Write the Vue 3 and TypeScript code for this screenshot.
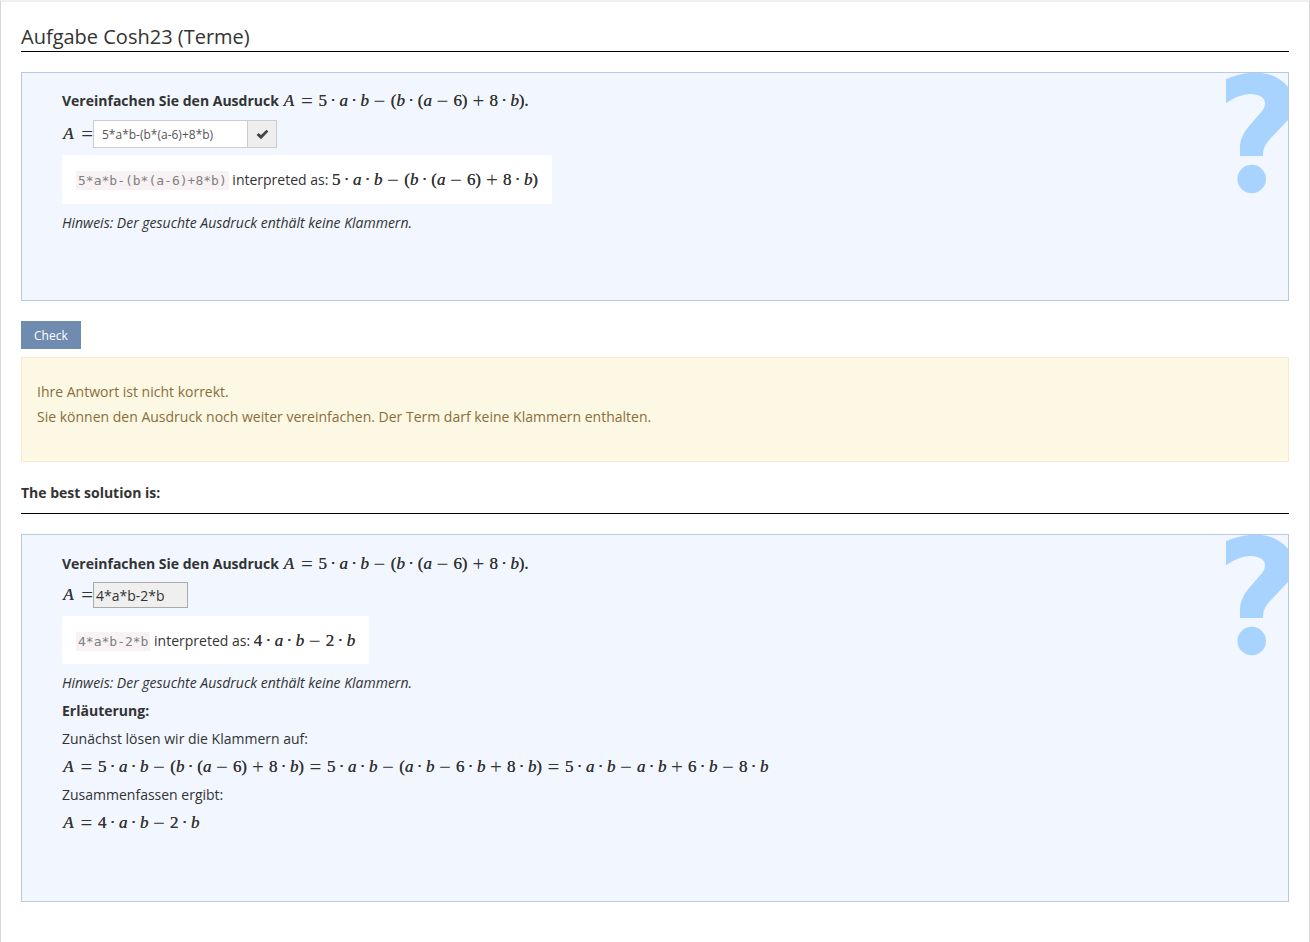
<script setup lang="ts">
import { ref, h, type FunctionalComponent } from 'vue'

const tokenClass = (t: string): string => {
  if (t === '=') return 'tok op rel'
  if (t === '+' || t === '−') return 'tok op bin'
  if (t === '·') return 'tok dot'
  if (t === '(' || t === ')') return 'tok paren'
  if (t === 'A') return 'tok var upper'
  if (/[a-z]/.test(t)) return 'tok var'
  return 'tok num'
}

// Typesets a formula by giving every symbol the spacing of its class.
const Formula: FunctionalComponent<{ tex: string }> = (props) =>
  h(
    'span',
    { class: 'formula' },
    [...props.tex].map((t) => h('span', { class: tokenClass(t) }, t)),
  )
Formula.props = ['tex']

// Decorative icon in the corner of a question panel.
const HelpMark: FunctionalComponent = () =>
  h('svg', { class: 'mark', width: 62, height: 122, viewBox: '0 1 62 122', 'aria-hidden': 'true' }, [
    h('path', {
      d: 'M0 7.3Q14 .7 30 .7C44 .7 55 6 63 16V47L45 66C39 72.5 37 76 37 84H14V75.5C14 68 17 61 24 53L34 41.5C38 37 39 34.5 39 31C39 25.5 33 22 24.5 22C17 22 8 25.5 0 31.3Z',
    }),
    h('circle', { cx: 25.7, cy: 107, r: 14.3 }),
  ])

const term = '5·a·b−(b·(a−6)+8·b)'
const answer = ref('5*a*b-(b*(a-6)+8*b)')
const solution = '4*a*b-2*b'
</script>

<template>
  <main class="page">
    <h1 class="title">Aufgabe Cosh23 (Terme)</h1>

    <section class="question first">
      <HelpMark />
      <p class="line strong">Vereinfachen Sie den Ausdruck <Formula :tex="'A=' + term" />.</p>
      <div class="entry">
        <label for="answer"><Formula tex="A=" /></label>
        <input id="answer" v-model="answer" class="field" type="text" />
        <button class="validate" type="button" aria-label="Validate">
          <svg width="13" height="11" viewBox="0 0 13 11" aria-hidden="true">
            <path d="M0.6 5.9 2.5 4 5 6 10.5 0.8 12.4 2.6 5 10.2Z" fill="#444" />
          </svg>
        </button>
      </div>
      <div class="preview">
        <code>{{ answer }}</code> interpreted as: <Formula :tex="term" />
      </div>
      <p class="line"><em>Hinweis: Der gesuchte Ausdruck enthält keine Klammern.</em></p>
    </section>

    <button class="check" type="button">Check</button>

    <div class="feedback" role="status">
      <p>Ihre Antwort ist nicht korrekt.</p>
      <p>Sie können den Ausdruck noch weiter vereinfachen. Der Term darf keine Klammern enthalten.</p>
    </div>

    <h2 class="subtitle">The best solution is:</h2>

    <section class="question second">
      <HelpMark />
      <p class="line strong">Vereinfachen Sie den Ausdruck <Formula :tex="'A=' + term" />.</p>
      <div class="entry">
        <label for="solution"><Formula tex="A=" /></label>
        <input id="solution" class="solved" type="text" :value="solution" readonly />
      </div>
      <div class="preview">
        <code>{{ solution }}</code> interpreted as: <Formula tex="4·a·b−2·b" />
      </div>
      <p class="line"><em>Hinweis: Der gesuchte Ausdruck enthält keine Klammern.</em></p>
      <p class="line strong">Erläuterung:</p>
      <p class="line">Zunächst lösen wir die Klammern auf:</p>
      <p class="line"><Formula :tex="'A=' + term + '=5·a·b−(a·b−6·b+8·b)=5·a·b−a·b+6·b−8·b'" /></p>
      <p class="line">Zusammenfassen ergibt:</p>
      <p class="line"><Formula tex="A=4·a·b−2·b" /></p>
    </section>
  </main>
</template>

<style>
body {
  margin: 0;
  background: #fff;
}
</style>

<style scoped>
.page {
  box-sizing: border-box;
  min-height: 100vh;
  padding: 20px 20px 40px;
  border: 1px solid #d6d6d6;
  border-top: 2px solid #f0f0f0;
  border-bottom: 0;
  font: 14px/28px "Open Sans", sans-serif;
  color: #333;
}
.title {
  margin: 0 0 20px;
  font-size: 20px;
  font-weight: 400;
  line-height: 29px;
  border-bottom: 1px solid #000;
}
.question {
  position: relative;
  overflow: hidden;
  box-sizing: border-box;
  padding: 14px 40px 63px;
  border: 1px solid #b8cbde;
  background: #f1f6ff;
}
.second {
  padding-top: 15px;
  padding-bottom: 64px;
}
.question :deep(.mark) {
  position: absolute;
  top: 0;
  right: 0;
  fill: #a8d3ff;
}
.line {
  margin: 0;
  height: 28px;
  white-space: nowrap;
}
.strong {
  font-weight: 700;
}
.entry {
  display: flex;
  align-items: center;
  height: 38px;
}
.second .entry {
  height: 34px;
}
.field,
.validate {
  box-sizing: border-box;
  height: 28px;
  border: 1px solid #ccc;
}
.field {
  width: 155px;
  padding: 0 8px;
  background: #fff;
  font: 12px "Open Sans", sans-serif;
  color: #555;
}
.validate {
  display: flex;
  align-items: center;
  justify-content: center;
  width: 30px;
  margin-left: -1px;
  padding: 0;
  background: #eee;
}
.solved {
  box-sizing: border-box;
  width: 95px;
  height: 26px;
  padding: 0 2px;
  border: 1px solid #aaa;
  background: #efefef;
  font: 14px "Open Sans", sans-serif;
  color: #333;
}
.preview {
  box-sizing: border-box;
  width: fit-content;
  margin: 2px 0 5px;
  padding: 11px 14px 10px;
  background: #fff;
  white-space: nowrap;
}
.second .preview {
  margin-top: 4px;
  padding-bottom: 9px;
}
.preview code {
  padding: 2px;
  background: #f9f2f4;
  color: #808080;
  font: 13px "DejaVu Sans Mono", monospace;
}
.check {
  display: block;
  height: 28px;
  margin: 20px 0 8px;
  padding: 0 13px;
  border: 0;
  background: #6f8bb0;
  font: 12px "Open Sans", sans-serif;
  color: #fff;
}
.feedback {
  margin-bottom: 20px;
  padding: 21px 15px 32px;
  border: 1px solid #faebcc;
  background: #fcf8e3;
  color: #8a6d3b;
  line-height: 25px;
}
.feedback p {
  margin: 0;
}
.subtitle {
  margin: 0 0 20px;
  padding-bottom: 9px;
  border-bottom: 1px solid #000;
  font-size: 14px;
  line-height: 22px;
}
.formula {
  font-family: "Liberation Serif", serif;
  font-size: 17px;
  font-weight: 400;
  line-height: 20px;
  text-shadow: 0 0 0 #333;
}
.formula :deep(.tok) {
  display: inline-block;
  width: 8px;
  text-align: center;
}
.formula :deep(.var) {
  font-style: italic;
}
.formula :deep(.upper) {
  width: 13px;
}
.formula :deep(.paren) {
  width: 6px;
}
.formula :deep(.dot) {
  width: 13px;
}
.formula :deep(.op) {
  font-size: 21px;
  line-height: 17px;
  vertical-align: -2px;
  text-shadow: none;
}
.formula :deep(.bin) {
  width: 22px;
}
.formula :deep(.rel) {
  width: 23px;
}
label .formula :deep(.rel) {
  width: 18px;
  text-align: right;
}
</style>
